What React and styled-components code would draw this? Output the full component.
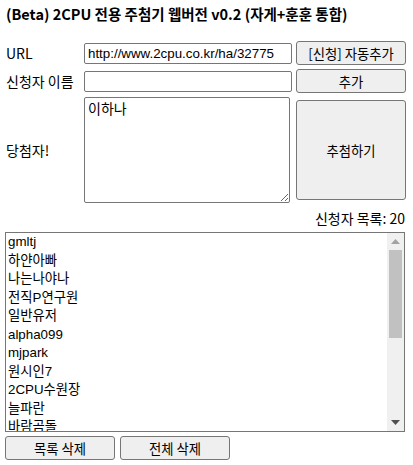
import React from "react";
import styled, { createGlobalStyle } from "styled-components";

const names = [
    "gmltj", "하얀아빠", "나는나야나", "전직P연구원", "일반유저", "alpha099",
    "mjpark", "원시인7", "2CPU수원장", "늘파란", "바람곰돌", "zerobase",
    "나그네", "dragon", "빛나는별", "kimchi", "푸른하늘", "luckyday",
    "새벽바람", "hello2cpu",
]

const App = () => {
    return (
        <Page>
            <GlobalStyle />
            <Title>(Beta) 2CPU 전용 주첨기 웹버전 v0.2 (자게+훈훈 통합)</Title>
            <Form>
                <Label>URL</Label>
                <TextInput defaultValue="http://www.2cpu.co.kr/ha/32775" />
                <Button>[신청] 자동추가</Button>

                <Label>신청자 이름</Label>
                <TextInput defaultValue="" />
                <Button>추가</Button>

                <Label>당첨자!</Label>
                <Winner defaultValue="이하나" />
                <Button $tall>추첨하기</Button>
            </Form>
            <Count>신청자 목록: {names.length}</Count>
            <ListBox>
                <Items>
                    {names.map(name => (
                        <Item key={name}>{name}</Item>
                    ))}
                </Items>
                <Scrollbar>
                    <Arrow>
                        <svg width="9" height="5" viewBox="0 0 9 5">
                            <path d="M0 5 L4.5 0 L9 5 Z" fill="#a3a3a3" />
                        </svg>
                    </Arrow>
                    <Track>
                        <Thumb />
                    </Track>
                    <Arrow>
                        <svg width="9" height="5" viewBox="0 0 9 5">
                            <path d="M0 0 L4.5 5 L9 0 Z" fill="#505050" />
                        </svg>
                    </Arrow>
                </Scrollbar>
            </ListBox>
            <Actions>
                <Button>목록 삭제</Button>
                <Button>전체 삭제</Button>
            </Actions>
        </Page>
    )
}

export default App

const GlobalStyle = createGlobalStyle`
 body {
    margin: 0;
    background: #ffffff;
    color: #000000;
    font-family: "Noto Sans CJK KR", "Noto Sans", sans-serif;
 }
`

const Page = styled.div`
 width: 400px;
 padding: 4px 5px 0 5px;
 display: flex;
 flex-direction: column;
`

const Title = styled.div`
 font-size: 14.5px;
 font-weight: bold;
 line-height: 20px;
 padding-left: 1px;
 white-space: nowrap;
`

const Form = styled.div`
 margin-top: 17px;
 display: grid;
 grid-template-columns: 75px 208px 110px;
 grid-template-rows: 24px 24px 106px;
 column-gap: 4px;
 row-gap: 4px;
 align-items: center;
`

const Label = styled.div`
 font-size: 14px;
 padding-left: 1px;
 white-space: nowrap;
`

const TextInput = styled.input`
 box-sizing: border-box;
 width: 208px;
 height: 21px;
 margin: 0;
 padding: 1px 3px;
 border: 1px solid #767676;
 border-radius: 2px;
 font-family: "Liberation Sans", "Noto Sans CJK KR", sans-serif;
 font-size: 13.33px;
 color: #000000;
 outline: none;
`

const Winner = styled.textarea`
 box-sizing: border-box;
 width: 206px;
 height: 106px;
 margin: 0;
 padding: 2px 3px;
 border: 1px solid #767676;
 border-radius: 2px;
 font-family: "Noto Sans CJK KR", sans-serif;
 font-size: 14px;
 line-height: 16px;
 color: #000000;
 outline: none;
`

const Button = styled.button`
 box-sizing: border-box;
 width: 110px;
 height: ${props => (props.$tall ? "100px" : "24px")};
 margin: 0;
 padding: 0 6px;
 background: #efefef;
 border: 1px solid #767676;
 border-radius: 3px;
 font-family: "Noto Sans CJK KR", sans-serif;
 font-size: 13.33px;
 color: #000000;
 display: grid;
 place-items: center;
`

const Count = styled.div`
 margin-top: 5px;
 text-align: right;
 font-size: 14px;
 line-height: 20px;
`

const ListBox = styled.div`
 margin-top: 4px;
 box-sizing: border-box;
 width: 400px;
 height: 200px;
 border: 1px solid #767676;
 display: flex;
 overflow: hidden;
`

const Items = styled.div`
 flex: 1;
 height: 100%;
 overflow: hidden;
`

const Item = styled.div`
 height: 18.5px;
 line-height: 18.5px;
 padding: 0 2px;
 font-family: "Liberation Sans", "Noto Sans CJK KR", sans-serif;
 font-size: 13.33px;
 white-space: nowrap;
`

const Scrollbar = styled.div`
 width: 17px;
 background: #f0f0f0;
 display: flex;
 flex-direction: column;
`

const Arrow = styled.div`
 height: 17px;
 display: grid;
 place-items: center;
`

const Track = styled.div`
 flex: 1;
 padding: 0 2px;
`

const Thumb = styled.div`
 height: 88px;
 background: #c1c1c1;
`

const Actions = styled.div`
 margin-top: 4px;
 display: flex;
 gap: 5px;
`
